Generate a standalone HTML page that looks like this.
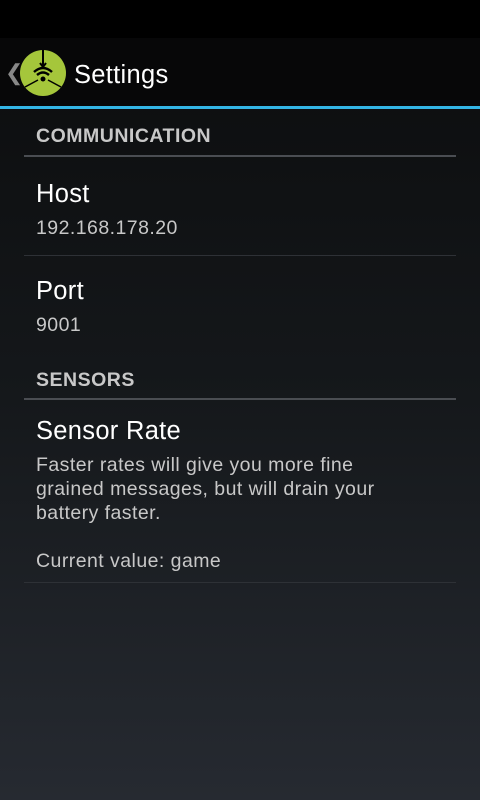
<!DOCTYPE html>
<html><head><style>
body{margin:0;width:480px;height:800px;overflow:hidden;font-family:"Liberation Sans",sans-serif;background:linear-gradient(#0b0c0d 0%,#15181b 50%,#262a31 100%);position:relative;}
.status{position:absolute;top:0;left:0;width:480px;height:38px;background:#000;}
.bar{position:absolute;top:38px;left:0;width:480px;height:68px;background:#070708;}
.line{position:absolute;top:106px;left:0;width:480px;height:3px;background:#33b5e5;}
.t{position:absolute;color:#fff;}
.cat{position:absolute;left:36px;color:#c8c8c8;font-weight:bold;font-size:19.5px;letter-spacing:0.5px;}
.catl{position:absolute;left:24px;width:432px;height:2px;background:#4a4d52;}
.title{position:absolute;left:36px;color:#fff;font-size:25.5px;letter-spacing:0.3px;}
.sum{position:absolute;left:36px;color:#c8c8c8;font-size:19.5px;line-height:24px;letter-spacing:0.45px;}
.div{position:absolute;left:24px;width:432px;height:1px;background:#2e3136;}
</style></head><body>
<div class="status"></div>
<div class="bar">
<div style="position:absolute;left:5px;top:22px;color:#888;font-size:22px;">❮</div>
<svg style="position:absolute;left:20px;top:12px" width="46" height="46" viewBox="0 0 46 46">
<circle cx="23" cy="23" r="23" fill="#a5c63b"/>
<path d="M23 0V16M20 13L23 17 26 13" stroke="#000" stroke-width="2" fill="none"/>
<path d="M14 22Q23 14 32 22M17 25Q23 20 29 25" stroke="#000" stroke-width="2.5" fill="none"/>
<circle cx="23" cy="29" r="2.5" fill="#000"/>
<path d="M5 37L18 30M41 37L28 30" stroke="#000" stroke-width="1.5"/>
</svg>
<div class="t" style="left:74px;top:23px;font-size:25.5px;letter-spacing:0.3px;">Settings</div>
</div>
<div class="line"></div>
<div class="cat" style="top:125px">COMMUNICATION</div>
<div class="catl" style="top:155px"></div>
<div class="title" style="top:180px">Host</div>
<div class="sum" style="top:216px">192.168.178.20</div>
<div class="div" style="top:255px"></div>
<div class="title" style="top:277px">Port</div>
<div class="sum" style="top:313px">9001</div>
<div class="cat" style="top:369px">SENSORS</div>
<div class="catl" style="top:398px"></div>
<div class="title" style="top:417px">Sensor Rate</div>
<div class="sum" style="top:453px">Faster rates will give you more fine<br>grained messages, but will drain your<br>battery faster.<br><br>Current value: game</div>
<div class="div" style="top:582px"></div>
</body></html>
